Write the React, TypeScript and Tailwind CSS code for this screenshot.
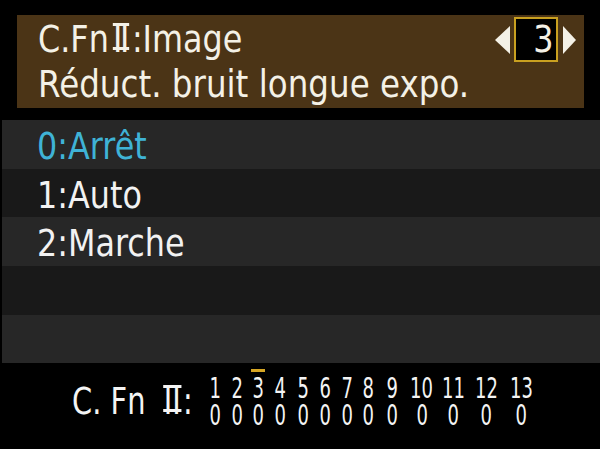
const font = { fontFamily: '"DejaVu Sans", "Liberation Sans", sans-serif' };

const options = [
  { label: "0:Arrêt", row: "h-[49px] bg-[#272727]", text: "text-[#3fb3d6]" },
  { label: "1:Auto", row: "h-[48px] bg-[#191919]", text: "text-[#f2f2f2]" },
  { label: "2:Marche", row: "h-[49px] bg-[#272727]", text: "text-[#f2f2f2]" },
  { label: "", row: "h-[49px] bg-[#191919]", text: "" },
  { label: "", row: "h-[48px] bg-[#272727]", text: "" },
];

const columns = [
  { n: "1", w: "w-[22px]" },
  { n: "2", w: "w-[21.5px]" },
  { n: "3", w: "w-[21.5px]", active: true },
  { n: "4", w: "w-[22.5px]" },
  { n: "5", w: "w-[22.5px]" },
  { n: "6", w: "w-[22px]" },
  { n: "7", w: "w-[21.5px]" },
  { n: "8", w: "w-[21.5px]" },
  { n: "9", w: "w-[27px]" },
  { n: "10", w: "w-[31.5px]" },
  { n: "11", w: "w-[32px]" },
  { n: "12", w: "w-[34px]" },
  { n: "13", w: "w-[35.5px]" },
];

const Arrow = ({ dir }: { dir: "left" | "right" }) => (
  <svg width="15" height="28" viewBox="0 0 15 28">
    {dir === "left" ? (
      <path d="M15 0 L15 28 L0 14 Z" fill="#f4f1e6" />
    ) : (
      <path d="M0 0 L0 28 L13 14 Z" fill="#f4f1e6" />
    )}
  </svg>
);

// roman numeral two, "II" between two bars like the camera font
const Two = ({ big }: { big?: boolean }) => (
  <span
    className={
      big
        ? "inline-block h-[27px] leading-[27px] border-y-[3px] border-current px-[1px] ml-[23px] mr-[2px]"
        : "inline-block h-[27px] leading-[27px] border-y-[3px] border-current tracking-[-3px] pr-[3px] ml-[5px] mr-[3px]"
    }
  >
    II
  </span>
);

export default function App() {
  return (
    <div className="w-[600px] h-[449px] bg-black flex flex-col overflow-hidden" style={font}>
      {/* header */}
      <div className="mt-[15px] ml-[17px] w-[567px] h-[93px] bg-[#4b3416] pt-[2px] pl-[21px] pr-[6px] text-[37px] text-[#f4f1e6]">
        <div className="h-[45px] flex items-center justify-between">
          <span className="inline-block leading-[45px] whitespace-pre origin-left scale-x-[0.86]">
            C.Fn<Two />:Image
          </span>
          <div className="flex items-center">
            <Arrow dir="left" />
            <div className="ml-[4px] mr-[5px] w-[44px] h-[45px] border-2 border-[#c9a020] bg-black flex items-center justify-end pr-[2px]">
              <span className="inline-block leading-[41px] origin-right scale-x-[0.86]">3</span>
            </div>
            <Arrow dir="right" />
          </div>
        </div>
        <div className="h-[45px] leading-[45px] whitespace-pre">
          <span className="inline-block origin-left scale-x-[0.88]">Réduct. bruit longue expo.</span>
        </div>
      </div>

      {/* options */}
      <div className="mt-[12px] ml-[2px] flex flex-col">
        {options.map((o, i) => (
          <div key={i} className={`${o.row} pl-[35px] pt-[4px]`}>
            {o.label && (
              <span className={`inline-block text-[37px] leading-[45px] origin-left scale-x-[0.86] ${o.text}`}>
                {o.label}
              </span>
            )}
          </div>
        ))}
      </div>

      {/* custom function summary */}
      <div className="flex-1 flex pl-[72px] text-[#f4f4f4]">
        <div className="w-[132px] pt-[16px]">
          <span className="inline-block text-[38px] leading-[45px] whitespace-pre origin-left scale-x-[0.76]">
            C. Fn<Two big />:
          </span>
        </div>
        <div className="flex pt-[6px]">
          {columns.map((c) => (
            <div key={c.n} className={`${c.w} flex flex-col items-center`}>
              <div className={`w-[14px] h-[3px] mb-[3px] ${c.active ? "bg-[#d6a624]" : "bg-transparent"}`} />
              <span className="inline-block text-[29px] leading-[27px] scale-x-[0.62]">{c.n}</span>
              <span className="inline-block text-[29px] leading-[27px] scale-x-[0.62]">0</span>
            </div>
          ))}
        </div>
      </div>
    </div>
  );
}
